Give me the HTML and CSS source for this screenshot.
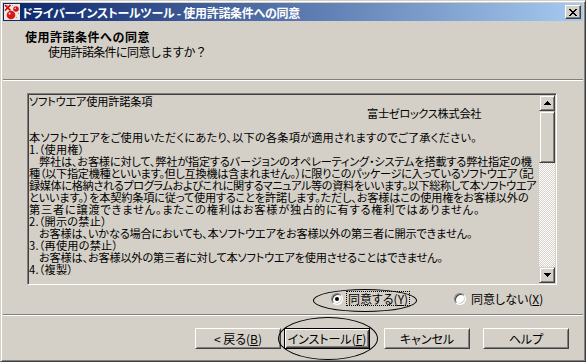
FILE: index.html
```html
<!DOCTYPE html>
<html lang="ja">
<head>
    <meta charset="UTF-8">
    <title>ドライバーインストールツール - 使用許諾条件への同意</title>
    <link rel="stylesheet" href="styles.css">
</head>
<body>
    <div class="window">
        <div class="titlebar">
            <svg class="app-icon" width="16" height="16" viewBox="0 0 16 16">
                <rect x="0" y="0" width="16" height="16" fill="#ece8e0"/>
                <path d="M1 2h1v1H1zM3 1h1v1H3zM5 2h1v1H5zM2 5h1v1H2zM8 1h1v1H8zM14 9h1v1h-1zM12 13h1v1h-1z" fill="#a0a0a0"/>
                <path d="M1 1L6.5 6.5M6.5 1L1 6.5" stroke="#d40000" stroke-width="1.6"/>
                <circle cx="12" cy="5" r="2.8" fill="#d81818"/>
                <circle cx="7" cy="11" r="4.3" fill="#d81818"/>
                <circle cx="5.6" cy="9.6" r="1.1" fill="#ffd0d0"/>
                <circle cx="11.2" cy="4.2" r="0.8" fill="#ffd0d0"/>
            </svg>
            <span class="title">ドライバーインストールツール - 使用許諾条件への同意</span>
            <button class="close-btn">
                <svg width="8" height="7" viewBox="0 0 8 7">
                    <path d="M0 0h2v1H0zM6 0h2v1H6zM1 1h2v1H1zM5 1h2v1H5zM2 2h4v1H2zM3 3h2v1H3zM2 4h4v1H2zM1 5h2v1H1zM5 5h2v1H5zM0 6h2v1H0zM6 6h2v1H6z" fill="#000"/>
                </svg>
            </button>
        </div>

        <div class="header">
            <div class="header-title">使用許諾条件への同意</div>
            <div class="header-sub">使用許諾条件に同意しますか？</div>
        </div>
        <div class="divider"></div>

        <div class="content">
            <div class="license">
                <div class="license-text">
                    <div>ソフトウエア使用許諾条項</div>
                    <div class="sign tight">富士ゼロックス株式会社</div>
                    <div>&nbsp;</div>
                    <div class="wide">本ソフトウエアをご使用いただくにあたり、以下の各条項が適用されますのでご了承ください。</div>
                    <div class="wide">1.（使用権）</div>
                    <div class="ind">弊社は、お客様に対して、弊社が指定するバージョンのオペレーティング・システムを搭載する弊社指定の機</div>
                    <div class="tight">種（以下指定機種といいます。但し互換機は含まれません。）に限りこのパッケージに入っているソフトウエア（記</div>
                    <div class="tighter">録媒体に格納されるプログラムおよびこれに関するマニュアル等の資料をいいます。以下総称して本ソフトウエア</div>
                    <div>といいます。）を本契約条項に従って使用することを許諾します。ただし、お客様はこの使用権をお客様以外の</div>
                    <div class="wider">第三者に譲渡できません。またこの権利はお客様が独占的に有する権利ではありません。</div>
                    <div class="wide">2.（開示の禁止）</div>
                    <div class="ind">お客様は、いかなる場合においても、本ソフトウエアをお客様以外の第三者に開示できません。</div>
                    <div class="wide">3.（再使用の禁止）</div>
                    <div class="ind">お客様は、お客様以外の第三者に対して本ソフトウエアを使用させることはできません。</div>
                    <div class="wide">4.（複製）</div>
                </div>
                <div class="scrollbar">
                    <div class="sb-btn">
                        <svg width="7" height="4" viewBox="0 0 7 4"><path d="M3 0h1v1h1v1h1v1h1v1H0V3h1V2h1V1h1z" fill="#000"/></svg>
                    </div>
                    <div class="sb-thumb"></div>
                    <div class="sb-track"></div>
                    <div class="sb-btn">
                        <svg width="7" height="4" viewBox="0 0 7 4"><path d="M0 0h7v1H6v1H5v1H4v1H3V3H2V2H1V1H0z" fill="#000"/></svg>
                    </div>
                </div>
            </div>

            <div class="choices">
                <label class="radio radio-agree">
                    <span class="radio-box on"></span>
                    <span class="radio-label focus">同意する(<u>Y</u>)</span>
                </label>
                <label class="radio">
                    <span class="radio-box"></span>
                    <span class="radio-label">同意しない(<u>X</u>)</span>
                </label>
            </div>
        </div>
        <div class="divider"></div>

        <div class="buttons">
            <button class="btn btn-back">&lt; 戻る(<u>B</u>)</button>
            <button class="btn btn-default">インストール(<u>F</u>)</button>
            <button class="btn btn-cancel">キャンセル</button>
            <button class="btn">ヘルプ</button>
        </div>

        <div class="mark mark-agree"></div>
        <div class="mark mark-install"></div>
    </div>
</body>
</html>
```

FILE: styles.css
```css
body {
    margin: 0;
    background-color: #d4d0c8;
    font-family: "Noto Sans CJK JP", sans-serif;
    font-size: 12px;
    color: #000;
}
.window {
    position: relative;
    width: 586px;
    height: 362px;
    box-sizing: border-box;
    border: 1px solid;
    border-color: #d4d0c8 #404040 #404040 #d4d0c8;
    box-shadow: inset 1px 1px #fff, inset -1px -1px #808080;
    padding: 2px;
    display: flex;
    flex-direction: column;
    background-color: #d4d0c8;
    overflow: hidden;
}
.titlebar {
    flex: none;
    height: 18px;
    display: flex;
    align-items: center;
    padding: 0 2px 0 1px;
    background: linear-gradient(to right, #0a246a, #a6caf0);
    color: #fff;
    font-weight: bold;
    font-size: 12px;
    font-feature-settings: "palt";
}
.app-icon {
    flex: none;
}
.title {
    margin-left: 2px;
    white-space: nowrap;
    letter-spacing: -0.3px;
}
.close-btn {
    margin-left: auto;
    width: 16px;
    height: 14px;
    padding: 0;
    box-sizing: border-box;
    border: 1px solid;
    border-color: #fff #404040 #404040 #fff;
    box-shadow: inset -1px -1px #808080, inset 1px 1px #d4d0c8;
    background-color: #d4d0c8;
    display: flex;
    align-items: center;
    justify-content: center;
}
.header {
    flex: none;
    height: 58px;
    box-sizing: border-box;
    padding: 9px 0 0 22px;
}
.header-title {
    font-weight: bold;
    line-height: 14px;
    letter-spacing: 0.5px;
}
.header-sub {
    line-height: 14px;
    margin-top: 1px;
    padding-left: 23px;
    letter-spacing: -0.7px;
}
.divider {
    flex: none;
    height: 0;
    border-top: 1px solid #808080;
    border-bottom: 1px solid #fff;
}
.content {
    flex: none;
    padding: 12px 0 0 24px;
}
.license {
    width: 530px;
    height: 192px;
    box-sizing: border-box;
    border: 1px solid;
    border-color: #808080 #fff #fff #808080;
    box-shadow: inset 1px 1px #404040, inset -1px -1px #d4d0c8;
    padding: 1px;
    display: flex;
}
.license-text {
    flex: 1;
    min-width: 0;
    font-size: 11.2px;
    line-height: 12px;
    letter-spacing: -0.2px;
    white-space: nowrap;
    font-feature-settings: "palt";
}
.license-text .sign {
    padding-left: 338px;
}
.license-text .ind {
    padding-left: 10px;
}
.license-text .wide {
    letter-spacing: 0.2px;
}
.license-text .wider {
    letter-spacing: 0.8px;
}
.license-text .tight {
    letter-spacing: -0.3px;
}
.license-text .tighter {
    letter-spacing: -0.4px;
}
.scrollbar {
    flex: none;
    width: 16px;
    display: flex;
    flex-direction: column;
}
.sb-btn,
.sb-thumb {
    box-sizing: border-box;
    border: 1px solid;
    border-color: #d4d0c8 #404040 #404040 #d4d0c8;
    box-shadow: inset 1px 1px #fff, inset -1px -1px #808080;
    background-color: #d4d0c8;
}
.sb-btn {
    height: 16px;
    display: flex;
    align-items: center;
    justify-content: center;
}
.sb-thumb {
    height: 52px;
}
.sb-track {
    flex: 1;
    background: repeating-conic-gradient(#d4d0c8 0 25%, #fff 0 50%) 0 0 / 2px 2px;
}
.choices {
    height: 29px;
    box-sizing: border-box;
    padding: 6px 0 0 304px;
    display: flex;
}
.radio {
    display: flex;
    align-items: center;
    height: 15px;
}
.radio-agree {
    width: 123px;
}
.radio-box {
    position: relative;
    width: 12px;
    height: 12px;
    box-sizing: border-box;
    border-radius: 50%;
    border: 1px solid;
    border-color: #808080 #fff #fff #808080;
    box-shadow: inset 1px 1px #404040, inset -1px -1px #d4d0c8;
    background-color: #fff;
    margin-right: 3px;
}
.radio-box.on::after {
    content: "";
    position: absolute;
    left: 3px;
    top: 3px;
    width: 4px;
    height: 4px;
    border-radius: 50%;
    background-color: #000;
}
.radio-label {
    line-height: 13px;
    padding: 0 1px;
    border: 1px solid transparent;
    font-feature-settings: "palt";
}
.radio-label.focus {
    border: 1px dotted #000;
}
.buttons {
    flex: none;
    padding: 12px 14px 0 0;
    display: flex;
    justify-content: flex-end;
}
.btn {
    width: 86px;
    height: 21px;
    box-sizing: border-box;
    padding: 0;
    border: 1px solid;
    border-color: #fff #404040 #404040 #fff;
    box-shadow: inset 1px 1px #d4d0c8, inset -1px -1px #808080;
    background-color: #d4d0c8;
    font-family: inherit;
    font-size: 12px;
    color: #000;
    line-height: 17px;
    font-feature-settings: "palt";
}
.btn-back {
    margin-right: 3px;
}
.btn-default {
    margin-right: 14px;
    border: 1px solid #000;
    box-shadow: inset 1px 1px #fff, inset -1px -1px #404040, inset 2px 2px #d4d0c8, inset -2px -2px #808080;
}
.btn-cancel {
    margin-right: 13px;
}
.mark {
    position: absolute;
    box-sizing: border-box;
    border: 1px solid #000;
    border-radius: 50%;
    pointer-events: none;
}
.mark-agree {
    left: 312px;
    top: 288px;
    width: 104px;
    height: 23px;
}
.mark-install {
    left: 277px;
    top: 316px;
    width: 100px;
    height: 43px;
}
```
